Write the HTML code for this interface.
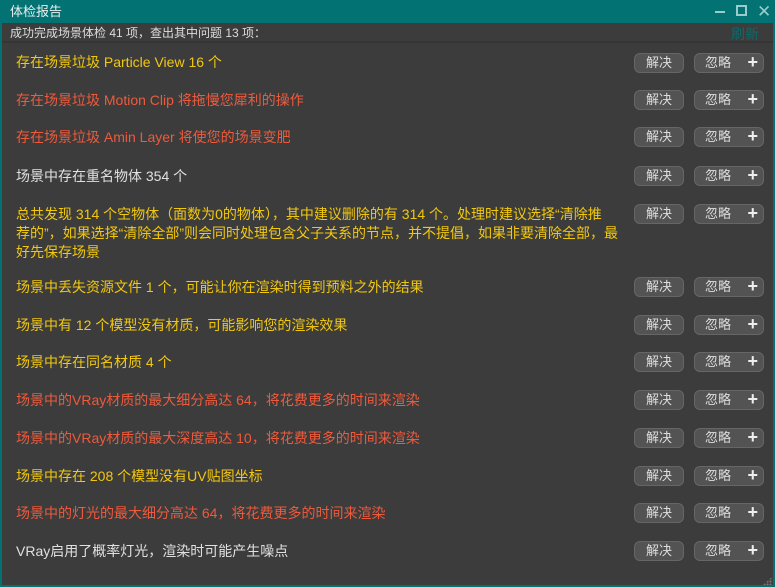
<!DOCTYPE html>
<html><head><meta charset="utf-8"><style>
*{margin:0;padding:0;box-sizing:border-box}
html,body{width:775px;height:587px;overflow:hidden;background:#3c3c3c}
body{font-family:"Liberation Sans","Noto Sans CJK SC",sans-serif;position:relative}
.win{position:absolute;left:0;top:0;width:775px;height:587px;border:2px solid #027272;border-top:none;background:#3c3c3c}
.title{position:absolute;left:0;top:0;width:775px;height:23px;background:#027272;color:#e8f0f0;font-size:13px;line-height:23px;padding-left:10px}
.ctl{position:absolute;top:0;height:23px;color:#9cc;font-size:14px;line-height:23px}
.sub{position:absolute;left:2px;top:23px;width:771px;height:20px;background:#3c3c3c;border-bottom:2px solid #353535;color:#ddd;font-size:12px;line-height:20px;padding-left:8px}
.ref{position:absolute;right:14px;top:1px;color:#0a6a6a;font-size:14px}
.row{position:absolute;left:16px;font-size:14px;line-height:18px;width:610px;white-space:nowrap}
.y{color:#f2c80f}.r{color:#ee5a3c}.w{color:#e0e0e0}
.b1,.b2{position:absolute;height:20px;border:1px solid #666;border-radius:6px;background:#535353;color:#ddd;font-size:13px;line-height:18px;text-align:center}
.b1{left:634px;width:50px}
.b2{left:694px;width:70px;padding-right:22px}
.b2 b{position:absolute;right:5px;top:-1px;font-size:18px;font-weight:bold;color:#eee}
</style></head><body>
<div class="win"></div>
<div class="title">体检报告</div>
<div class="ctl" style="left:715px;"><div style="position:absolute;top:11px;width:10px;height:2px;background:#9cc"></div></div>
<div class="ctl" style="left:736px;"><div style="position:absolute;top:5px;width:11px;height:11px;border:2px solid #9cc"></div></div>
<div class="ctl" style="left:757px;font-size:17px;">✕</div>
<div class="sub">成功完成场景体检 41 项，查出其中问题 13 项：<span class="ref">刷新</span></div>

<div class="row y" style="top:53px">存在场景垃圾 Particle View 16 个</div>
<div class="row r" style="top:91px">存在场景垃圾 Motion Clip 将拖慢您犀利的操作</div>
<div class="row r" style="top:128px">存在场景垃圾 Amin Layer 将使您的场景变肥</div>
<div class="row w" style="top:167px">场景中存在重名物体 354 个</div>
<div class="row y" style="top:205px;line-height:19px">总共发现 314 个空物体（面数为0的物体），其中建议删除的有 314 个。处理时建议选择“清除推<br>荐的”，如果选择“清除全部”则会同时处理包含父子关系的节点，并不提倡，如果非要清除全部，最<br>好先保存场景</div>
<div class="row y" style="top:278px">场景中丢失资源文件 1 个，可能让你在渲染时得到预料之外的结果</div>
<div class="row y" style="top:316px">场景中有 12 个模型没有材质，可能影响您的渲染效果</div>
<div class="row y" style="top:353px">场景中存在同名材质 4 个</div>
<div class="row r" style="top:391px">场景中的VRay材质的最大细分高达 64，将花费更多的时间来渲染</div>
<div class="row r" style="top:429px">场景中的VRay材质的最大深度高达 10，将花费更多的时间来渲染</div>
<div class="row y" style="top:467px">场景中存在 208 个模型没有UV贴图坐标</div>
<div class="row r" style="top:504px">场景中的灯光的最大细分高达 64，将花费更多的时间来渲染</div>
<div class="row w" style="top:542px">VRay启用了概率灯光，渲染时可能产生噪点</div>

<div class="b1" style="top:53px">解决</div><div class="b2" style="top:53px">忽略<b>+</b></div>
<div class="b1" style="top:90px">解决</div><div class="b2" style="top:90px">忽略<b>+</b></div>
<div class="b1" style="top:127px">解决</div><div class="b2" style="top:127px">忽略<b>+</b></div>
<div class="b1" style="top:166px">解决</div><div class="b2" style="top:166px">忽略<b>+</b></div>
<div class="b1" style="top:204px">解决</div><div class="b2" style="top:204px">忽略<b>+</b></div>
<div class="b1" style="top:277px">解决</div><div class="b2" style="top:277px">忽略<b>+</b></div>
<div class="b1" style="top:315px">解决</div><div class="b2" style="top:315px">忽略<b>+</b></div>
<div class="b1" style="top:352px">解决</div><div class="b2" style="top:352px">忽略<b>+</b></div>
<div class="b1" style="top:390px">解决</div><div class="b2" style="top:390px">忽略<b>+</b></div>
<div class="b1" style="top:428px">解决</div><div class="b2" style="top:428px">忽略<b>+</b></div>
<div class="b1" style="top:466px">解决</div><div class="b2" style="top:466px">忽略<b>+</b></div>
<div class="b1" style="top:503px">解决</div><div class="b2" style="top:503px">忽略<b>+</b></div>
<div class="b1" style="top:541px">解决</div><div class="b2" style="top:541px">忽略<b>+</b></div>
<div style="position:absolute;left:763px;top:577px;width:9px;height:8px;background:radial-gradient(circle,#777 1px,transparent 1.2px) 0 0/3px 3px;clip-path:polygon(100% 0,100% 100%,0 100%)"></div>
</body></html>
